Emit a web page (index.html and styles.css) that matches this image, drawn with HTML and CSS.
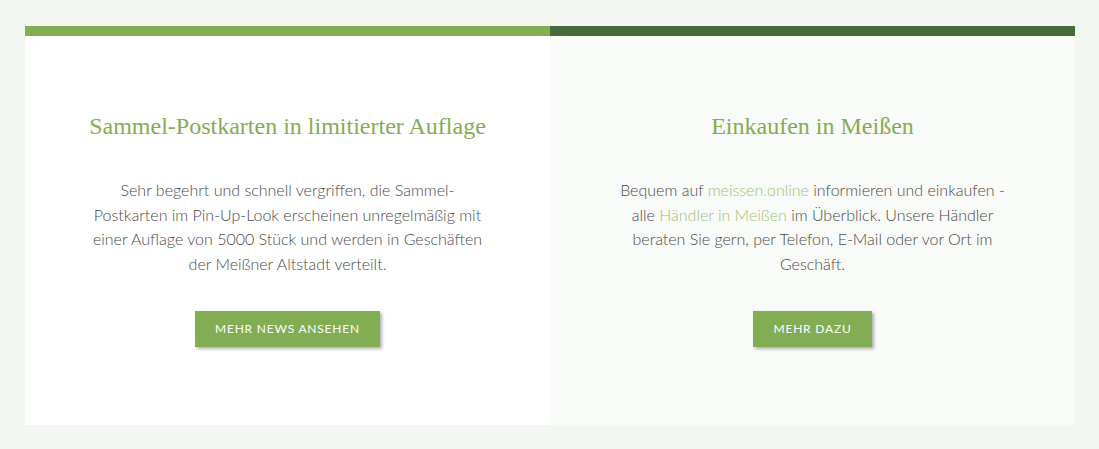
FILE: index.html
```html
<!DOCTYPE html>
<html lang="de">
<head>
<meta charset="utf-8">
<link rel="stylesheet" href="styles.css">
</head>
<body>
<div class="cards">
  <section class="card card-light">
    <h2 class="card-title">Sammel-Postkarten in limitierter Auflage</h2>
    <p class="card-text">Sehr begehrt und schnell vergriffen, die Sammel-Postkarten im Pin-Up-Look erscheinen unregelmäßig mit einer Auflage von 5000 Stück und werden in Geschäften der Meißner Altstadt verteilt.</p>
    <a class="btn" href="#">Mehr News ansehen</a>
  </section>
  <section class="card card-dark">
    <h2 class="card-title">Einkaufen in Meißen</h2>
    <p class="card-text">Bequem auf <a class="link" href="#">meissen.online</a> informieren und einkaufen - alle <a class="link" href="#">Händler in Meißen</a> im Überblick. Unsere Händler beraten Sie gern, per Telefon, E-Mail oder vor Ort im Geschäft.</p>
    <a class="btn" href="#">Mehr dazu</a>
  </section>
</div>
</body>
</html>
```

FILE: styles.css
```css
html, body {
  margin: 0;
  padding: 0;
  background: #f3f7f1;
}
.cards {
  display: grid;
  grid-template-columns: 1fr 1fr;
  margin: 26px 24px 24px 25px;
  height: 399px;
}
.card {
  display: flex;
  flex-direction: column;
  align-items: center;
  text-align: center;
  padding: 74px 62px 0;
  box-sizing: border-box;
}
.card-light {
  background: #ffffff;
  border-top: 10px solid #82ad51;
}
.card-dark {
  background: #f9fbf8;
  border-top: 10px solid #476b3a;
}
.card-title {
  margin: 0;
  font-family: "Liberation Serif", "DejaVu Serif", serif;
  font-weight: normal;
  font-size: 24px;
  line-height: 32px;
  color: #82ad51;
}
.card-text {
  margin: 36px 0 0;
  font-family: Lato, "Liberation Sans", sans-serif;
  font-weight: 300;
  font-size: 16px;
  line-height: 24.5px;
  color: #4a4a4a;
}
.link {
  color: #9cc27a;
  text-decoration: none;
}
.btn {
  margin-top: 35px;
  display: inline-block;
  height: 36px;
  line-height: 36px;
  padding: 0 20px;
  background: #82ad52;
  color: #ffffff;
  font-family: Lato, "Liberation Sans", sans-serif;
  font-size: 12px;
  letter-spacing: 0.8px;
  text-transform: uppercase;
  text-decoration: none;
  box-shadow: 2px 2px 3px rgba(0, 0, 0, 0.3);
}
```
